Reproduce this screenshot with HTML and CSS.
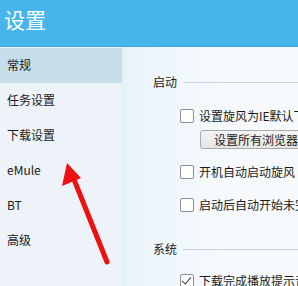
FILE: index.html
```html
<!DOCTYPE html>
<html lang="zh-CN">
<head>
  <meta charset="UTF-8">
  <meta name="viewport" content="width=device-width, initial-scale=1">
  <title>设置</title>
  <link rel="stylesheet" href="styles.css">
</head>
<body>

<div class="window">
  <div class="title-bar">设置</div>

  <div class="main">
    <!-- 左侧菜单 -->
    <ul class="side-menu">
      <li class="active">常规</li>
      <li>任务设置</li>
      <li>下载设置</li>
      <li>eMule</li>
      <li>BT</li>
      <li>高级</li>
    </ul>

    <!-- 右侧内容 -->
    <div class="content">
      <div class="group-title">启动</div>
      <label class="check-row first"><span class="box"></span>设置旋风为IE默认下载工具</label>
      <button class="btn">设置所有浏览器默认下载工具</button>
      <label class="check-row gap-a"><span class="box"></span>开机自动启动旋风</label>
      <label class="check-row gap-c"><span class="box"></span>启动后自动开始未完成的任务</label>

      <div class="group-title second">系统</div>
      <label class="check-row gap-b"><span class="box checked"></span>下载完成播放提示音</label>
    </div>
  </div>

  <!-- 红色箭头标注 -->
  <svg class="arrow" width="298" height="286" viewBox="0 0 298 286">
    <line x1="107" y1="262" x2="73" y2="177" stroke="#ee1111" stroke-width="5" stroke-linecap="round"/>
    <polygon points="67,163 62,186 81,178" fill="#ee1111"/>
  </svg>
</div>

</body>
</html>
```

FILE: styles.css
```css
body {
  margin: 0;
  font-family: "Noto Sans CJK SC", "Noto Sans", sans-serif;
  font-size: 12px;
  color: #1a1a1a;
}

.window {
  position: relative;
  width: 298px;
  height: 286px;
  overflow: hidden;
  background-color: #f4f9fc;
}

.title-bar {
  height: 47px;
  box-sizing: border-box;
  padding: 2px 0 0 4px;
  background-color: #46b5eb;
  border-bottom: 1px solid #3aa6dc;
  color: white;
  font-size: 21px;
  line-height: 34px;
}

.main {
  display: flex;
  height: 239px;
}

.side-menu {
  list-style: none;
  margin: 0;
  padding: 1px 0 0 0;
  width: 122px;
  flex-shrink: 0;
  background-color: #edf3f8;
}

.side-menu li {
  height: 35px;
  line-height: 34px;
  padding-left: 7px;
}

.side-menu li.active {
  background-color: #c6deea;
}

.content {
  flex: 1;
  display: flex;
  flex-direction: column;
  align-items: flex-start;
  padding: 27px 0 0 31px;
  background: linear-gradient(to right, #e4f1f9, #eff7fc 30px, #f6fafd 120px);
  white-space: nowrap;
}

.group-title {
  display: flex;
  align-items: center;
  align-self: stretch;
  height: 16px;
  line-height: 16px;
}

.group-title::after {
  content: "";
  flex: 1;
  height: 1px;
  margin-left: 6px;
  background-color: #c9d2d8;
}

.group-title.second {
  margin-top: 28px;
}

.check-row {
  display: flex;
  align-items: center;
  height: 16px;
  line-height: 16px;
  margin-left: 27px;
}

.check-row.first {
  margin-top: 18px;
}

.check-row.gap-a {
  margin-top: 15px;
}

.check-row.gap-b {
  margin-top: 16px;
}

.check-row.gap-c {
  margin-top: 17px;
}

.box {
  width: 12px;
  height: 12px;
  margin-right: 5px;
  border: 1px solid #8e8e8e;
  border-radius: 2px;
  background-color: white;
  position: relative;
}

.box.checked::after {
  content: "";
  position: absolute;
  left: 3px;
  top: 0px;
  width: 4px;
  height: 8px;
  border: solid #333;
  border-width: 0 1.5px 1.5px 0;
  transform: rotate(40deg);
}

.btn {
  margin: 6px 0 0 47px;
  height: 25px;
  padding: 0 13px;
  font-family: inherit;
  font-size: 12px;
  color: #1a1a1a;
  background: linear-gradient(#f4f4f4, #e4e4e4);
  border: 1px solid #a9a9a9;
  border-radius: 3px;
}

.arrow {
  position: absolute;
  left: 0;
  top: 0;
  pointer-events: none;
}
```
